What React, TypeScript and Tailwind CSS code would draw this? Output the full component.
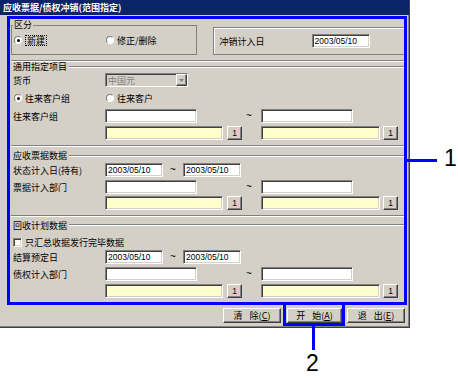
import React from 'react';

// classic win2k bevels
const sunken =
  'border border-t-[#808080] border-l-[#808080] border-b-white border-r-white shadow-[inset_1px_1px_0_#404040,inset_-1px_-1px_0_#d4d0c8]';
const raised =
  'border border-t-white border-l-white border-b-[#404040] border-r-[#404040] shadow-[inset_-1px_-1px_0_#808080,inset_1px_1px_0_#d4d0c8]';
const num = "font-['Liberation_Sans',sans-serif] text-[8.5px] leading-none text-black";

const TextBox: React.FC<{ w: string; yellow?: boolean; value?: string; className?: string }> = ({ w, yellow, value, className = '' }) => (
  <div className={`${sunken} ${w} ${yellow ? 'bg-[#ffffcc]' : 'bg-white'} flex h-[14px] items-center pl-[2px] ${num} ${className}`}>
    {value}
  </div>
);

const SmallBtn: React.FC<{ className?: string }> = ({ className = '' }) => (
  <div className={`${raised} flex h-[14px] w-[15px] items-center justify-center bg-[#d4d0c8] ${num} text-[7px] ${className}`}>1</div>
);

const Radio: React.FC<{ checked?: boolean }> = ({ checked }) => (
  <span className="flex h-[8px] w-[8px] items-center justify-center rounded-full border border-t-[#808080] border-l-[#808080] border-b-white border-r-white bg-white">
    {checked && <span className="h-[3px] w-[3px] rounded-full bg-black" />}
  </span>
);

const Label: React.FC<{ children: React.ReactNode }> = ({ children }) => (
  <div className="w-[94px] pl-[2px] text-[9px] leading-none">{children}</div>
);

const Separator = ({ className = '' }: { className?: string }) => (
  <div className={`h-[2px] border-t border-t-[#808080] border-b border-b-white ${className}`} />
);

const SectionTitle: React.FC<{ title: string; className?: string }> = ({ title, className = '' }) => (
  <div className={`flex items-center ${className}`}>
    <span className="pl-[2px] text-[9px] leading-none">{title}</span>
    <div className="ml-[2px] h-[2px] flex-1 border-t border-t-[#808080] border-b border-b-white" />
  </div>
);

const WhiteRow: React.FC<{ label?: string; className?: string }> = ({ label, className = '' }) => (
  <div className={`flex items-center ${className}`}>
    <Label>{label}</Label>
    <TextBox w="w-[92px]" />
    <span className={`w-[64px] pl-[49px] ${num} text-[10px]`}>~</span>
    <TextBox w="w-[92px]" />
  </div>
);

const LookupRow: React.FC<{ className?: string }> = ({ className = '' }) => (
  <div className={`flex items-center ${className}`}>
    <div className="w-[94px]" />
    <TextBox w="w-[118px]" yellow />
    <SmallBtn className="ml-[4px]" />
    <TextBox w="w-[119px]" yellow className="ml-[19px]" />
    <SmallBtn className="ml-[3px]" />
  </div>
);

const DateRow: React.FC<{ label: string; className?: string }> = ({ label, className = '' }) => (
  <div className={`flex items-center ${className}`}>
    <Label>{label}</Label>
    <TextBox w="w-[58px]" value="2003/05/10" />
    <span className={`w-[20px] pl-[7px] ${num} text-[10px]`}>~</span>
    <TextBox w="w-[58px]" value="2003/05/10" />
  </div>
);

const App: React.FC = () => {
  return (
    <div className="relative h-[379px] w-[458px] overflow-hidden bg-white font-['Noto_Sans_CJK_SC',sans-serif] text-black">
      <div className="flex h-[328px] w-[410px] flex-col border-r border-b border-[#404040] bg-[#d4d0c8] shadow-[inset_-1px_-1px_0_#808080]">
        <div className="h-[15px] bg-[#0a246a] pl-[3px] text-[9px] leading-[15px] font-bold text-white">
          应收票据/债权冲销(范围指定)
        </div>

        <div className="flex flex-col pl-[11px] pr-[3px]">
          {/* 区分 + 冲销计入日 */}
          <div className="mt-[5px] flex h-[35px] items-start">
            <fieldset className="h-[35px] w-[186px] border border-[#808080]">
              <legend className="ml-[1px] px-[1px] text-[9px] leading-[10px]">区分</legend>
              <div className="mt-[4px] flex h-[12px] items-center pl-[2px]">
                <div className="flex w-[92px] items-center">
                  <Radio checked />
                  <span className="ml-[3px] border border-dotted border-black px-[1px] text-[9px] leading-[9px]">新建</span>
                </div>
                <Radio />
                <span className="ml-[3px] text-[9px] leading-none">修正/删除</span>
              </div>
            </fieldset>
            <div className="mt-[7px] ml-[16px] flex h-[28px] w-[194px] items-center border border-[#808080] shadow-[inset_1px_1px_0_#fff]">
              <span className="w-[98px] pl-[6px] text-[9px] leading-none">冲销计入日</span>
              <TextBox w="w-[58px]" value="2003/05/10" />
            </div>
          </div>

          <Separator className="mt-[5px]" />

          {/* 通用指定项目 */}
          <SectionTitle title="通用指定项目" className="h-[9px]" />
          <div className="mt-[2px] flex h-[14px] items-center">
            <Label>货币</Label>
            <div className={`${sunken} flex h-[14px] w-[83px] items-center bg-[#d4d0c8]`}>
              <span className="flex-1 pl-[2px] text-[9px] leading-none text-[#808080]">中国元</span>
              <div className={`${raised} flex h-[12px] w-[11px] items-center justify-center bg-[#d4d0c8]`}>
                <svg width="5" height="3" viewBox="0 0 5 3">
                  <path d="M0 0h5L2.5 3z" fill="#808080" />
                </svg>
              </div>
            </div>
          </div>
          <div className="mt-[5px] flex h-[12px] items-center pl-[3px]">
            <div className="flex w-[92px] items-center">
              <Radio checked />
              <span className="ml-[3px] text-[9px] leading-none">往来客户组</span>
            </div>
            <Radio />
            <span className="ml-[3px] text-[9px] leading-none">往来客户</span>
          </div>
          <WhiteRow label="往来客户组" className="mt-[5px]" />
          <LookupRow className="mt-[3px]" />

          <Separator className="mt-[5px]" />

          {/* 应收票据数据 */}
          <SectionTitle title="应收票据数据" className="mt-[4px] h-[9px]" />
          <DateRow label="状态计入日(持有)" className="mt-[3px]" />
          <WhiteRow label="票据计入部门" className="mt-[3px]" />
          <LookupRow className="mt-[2px]" />

          <Separator className="mt-[5px]" />

          {/* 回收计划数据 */}
          <SectionTitle title="回收计划数据" className="mt-[3px] h-[10px]" />
          <div className="mt-[6px] flex h-[12px] items-center pl-[2px]">
            <span className={`${sunken} h-[9px] w-[9px] bg-white`} />
            <span className="ml-[3px] text-[9px] leading-none">只汇总收据发行完毕数据</span>
          </div>
          <DateRow label="结算预定日" className="mt-[2px]" />
          <WhiteRow label="债权计入部门" className="mt-[3px]" />
          <LookupRow className="mt-[3px]" />

          {/* buttons */}
          <div className="mt-[10px] flex justify-end gap-[5px] pr-[1px]">
            <button className={`${raised} flex h-[15px] w-[58px] items-center justify-center bg-[#d4d0c8] text-[9px] leading-none`}>
              清<span className="ml-[7px]">除(<u>C</u>)</span>
            </button>
            <button className={`${raised} ml-[1px] flex h-[15px] w-[55px] items-center justify-center bg-[#d4d0c8] text-[9px] leading-none`}>
              开<span className="ml-[7px]">始(<u>A</u>)</span>
            </button>
            <button className={`${raised} flex h-[15px] w-[58px] items-center justify-center bg-[#d4d0c8] text-[9px] leading-none`}>
              退<span className="ml-[7px]">出(<u>E</u>)</span>
            </button>
          </div>
        </div>
      </div>

      {/* callout annotations */}
      <div className="absolute left-[7px] top-[16px] h-[289px] w-[400px] border-[3px] border-[#0000ff]" />
      <div className="absolute left-[283px] top-[302px] h-[24px] w-[62px] border-[3px] border-[#0000ff]" />
      <div className="absolute left-[312px] top-[326px] h-[24px] w-[3px] bg-[#0000ff]" />
      <div className="absolute left-[407px] top-[159px] h-[3px] w-[30px] bg-[#0000ff]" />
      <span className="absolute left-[444px] top-[147px] font-['Liberation_Sans',sans-serif] text-[23px] leading-none">1</span>
      <span className="absolute left-[306px] top-[352px] font-['Liberation_Sans',sans-serif] text-[23px] leading-none">2</span>
    </div>
  );
};

export default App;
